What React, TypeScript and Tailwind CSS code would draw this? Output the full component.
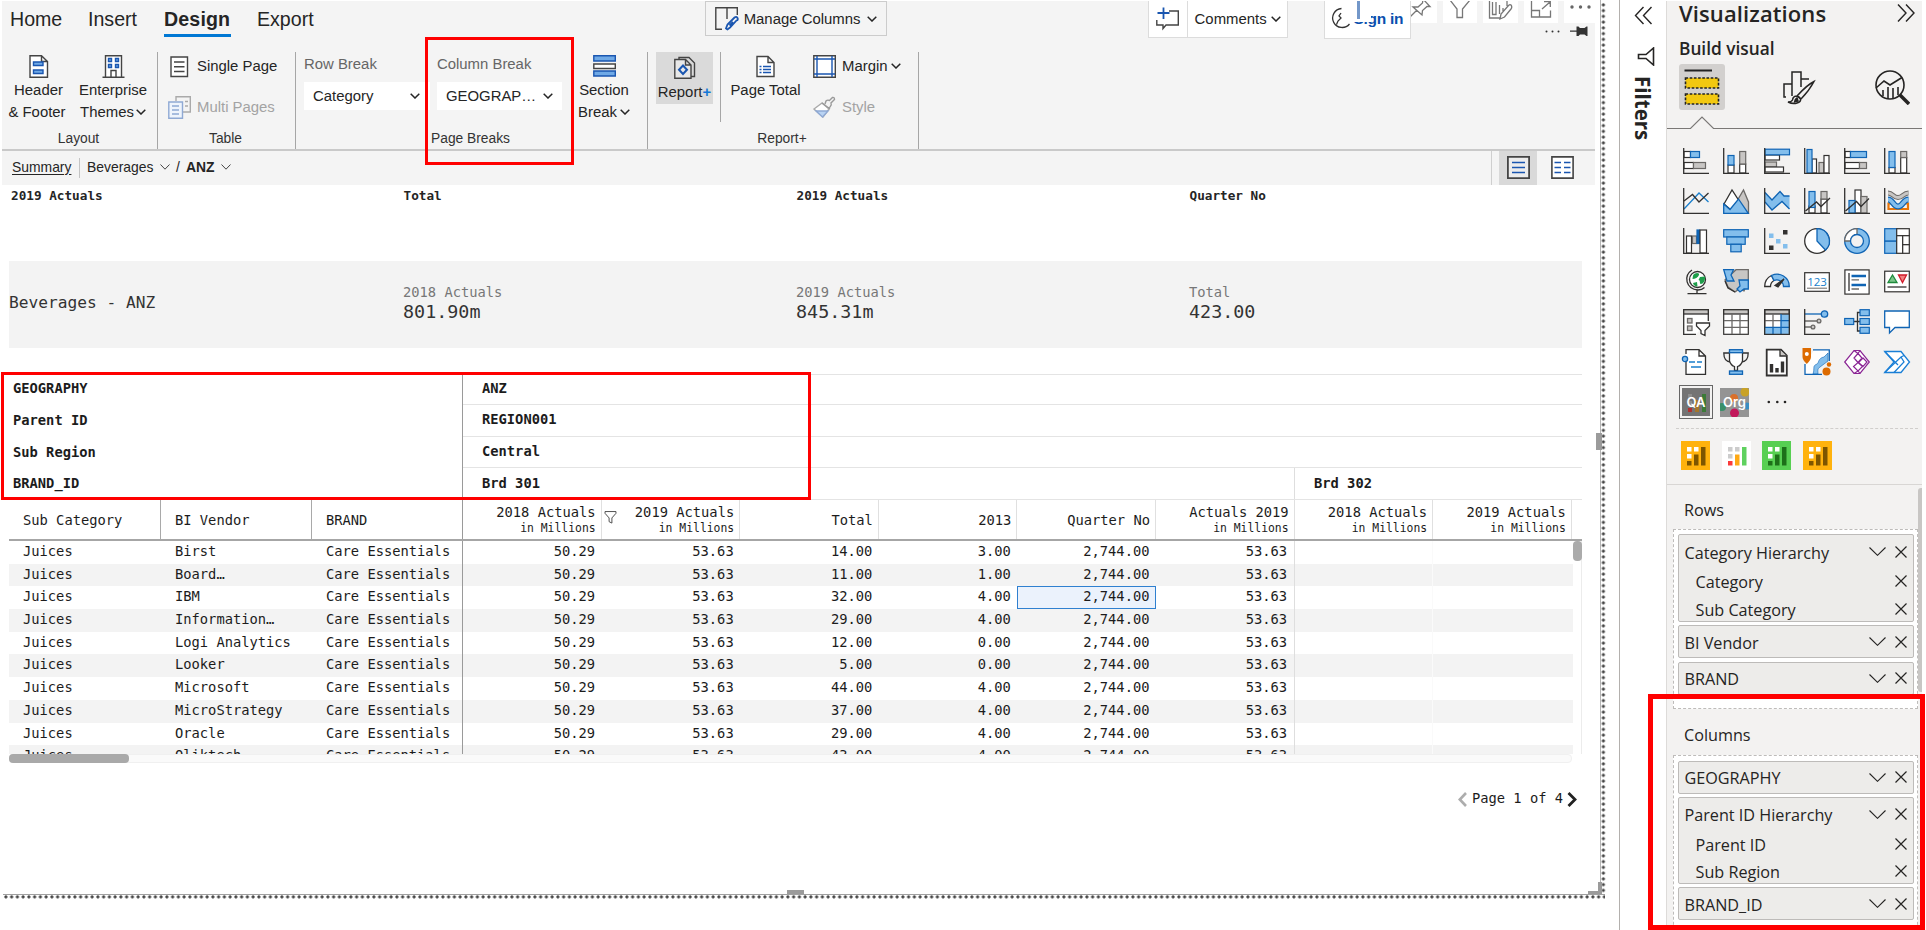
import React from "react";

const D = "#323130";
const B = "#83beec";
const BS = "#0f64b4";
const G = "#c8c6c4";
const GS = "#6b6967";
const W = "#ffffff";

type BoxProps = { x: number; y: number; w: number; h: number; f?: string; s?: string };
const Box = ({ x, y, w, h, f = W, s = D }: BoxProps) => (
  <rect x={x} y={y} width={w} height={h} fill={f} stroke={s} strokeWidth={1.2} />
);
const Axis = () => <path d="M.7 0V25.3H26" fill="none" stroke={D} strokeWidth={1.3} />;
const Ico = ({ children }: { children: React.ReactNode }) => (
  <svg className="block h-[26px] w-[26px] overflow-visible" viewBox="0 0 26 26" fill="none" strokeWidth={1.3}>
    {children}
  </svg>
);

const Chev = ({ className = "" }: { className?: string }) => (
  <svg className={`block h-[6px] w-[10px] shrink-0 ${className}`} viewBox="0 0 10 6" fill="none" stroke="currentColor" strokeWidth="1.5">
    <path d="M.7.7L5 5L9.3.7" />
  </svg>
);

const ThinChev = ({ className = "" }: { className?: string }) => (
  <svg className={`block h-[6px] w-[10px] shrink-0 ${className}`} viewBox="0 0 10 6" fill="none" stroke="#444" strokeWidth="1">
    <path d="M.5.5L5 5.2L9.5.5" />
  </svg>
);

const vizIcons: React.ReactNode[] = [
  <><Box x={1} y={3.5} w={6.5} h={6} /><Box x={7.5} y={3.5} w={9} h={6} f={B} s={BS} /><Box x={1} y={14.5} w={9.5} h={6} /><Box x={10.5} y={14.5} w={12} h={6} f={G} s={GS} /><Axis /></>,
  <><Box x={5} y={17} w={6} h={8} /><Box x={5} y={7.5} w={6} h={9.5} f={B} s={BS} /><Box x={16.7} y={16} w={6} h={9} /><Box x={16.7} y={3.5} w={6} h={12.5} f={G} s={GS} /><Axis /></>,
  <><Box x={1} y={7} w={14.5} h={5} /><Box x={1} y={14} w={11.5} h={5} f={G} s={GS} /><Box x={1} y={19} w={18.5} h={5} /><Box x={1} y={1.2} w={24.5} h={5.6} f={B} s={BS} /><Axis /></>,
  <><Box x={8} y={11} w={4.5} h={14} /><Box x={15} y={14.5} w={5} h={10.5} f={G} s={GS} /><Box x={20} y={7.5} w={5} h={17.5} /><Box x={3} y={1.5} w={5} h={23.5} f={B} s={BS} /><Axis /></>,
  <><Box x={1} y={3.5} w={5.5} h={6} /><Box x={6.5} y={3.5} w={16} h={6} f={B} s={BS} /><Box x={1} y={14.5} w={14.5} h={6} /><Box x={15.5} y={14.5} w={7} h={6} f={G} s={GS} /><Axis /></>,
  <><Box x={5} y={19.5} w={6} h={5.5} /><Box x={5} y={3.5} w={6} h={16} f={B} s={BS} /><Box x={16.7} y={9.5} w={6} h={15.5} /><Box x={16.7} y={3.5} w={6} h={6} f={G} s={GS} /><Axis /></>,

  <><path d="M1 21L16 5L25.5 14" stroke="#1a7fcc" /><path d="M1 13L9.5 6.5L16 14L25.5 5" stroke={D} /><Axis /></>,
  <><path d="M14 13L20.5 2L25.5 14V25H20Z" fill={G} stroke={GS} /><path d="M1 16L9 2L15.5 12L8 22Z" fill={W} stroke={D} /><path d="M.7 25.3V16L7 21.5L15.5 11L25.3 25.3Z" fill={B} stroke={BS} /></>,
  <><path d="M1 4.5L8 12L16 3.5L20 8H25.5V21L18 13.5L8 22L1 14Z" fill={B} /><path d="M1 4.5L8 12L16 3.5L20 8H25.5M25.5 21L18 13.5L8 22L1 14" stroke={BS} /><Axis /></>,
  <><Box x={5} y={18} w={6} h={7} /><Box x={5} y={3.5} w={6} h={16} f={B} s={BS} /><Box x={17} y={11} w={6} h={14} /><Box x={17} y={3.5} w={6} h={7.5} f={G} s={GS} /><path d="M1.5 23L12.5 14L17 18.5L26 10" stroke={D} /><Axis /></>,
  <><Box x={11} y={2} w={6} h={23} /><Box x={17} y={8.5} w={6} h={16.5} f={G} s={GS} /><Box x={5} y={12.5} w={6} h={12.5} f={B} s={BS} /><path d="M1.5 23L12.5 13.5L17 18.5L25 10.5" stroke={D} /><Axis /></>,
  <><path d="M4.500 15.500H9L13 19L17 15.500H24V21H4.500Z" fill="none" stroke="#e8760a" strokeWidth={2.2} /><path d="M4 5C9 5 9 9.500 14 9.500S19 5 24.500 5" stroke={GS} strokeWidth={5} /><path d="M4 5C9 5 9 9.500 14 9.500S19 5 24.500 5" stroke={G} strokeWidth={3} /><path d="M4 11.500C9 11.500 9 18.500 14 18.500S19 11.500 24.500 11.500" stroke={BS} strokeWidth={6} /><path d="M4 11.500C9 11.500 9 18.500 14 18.500S19 11.500 24.500 11.500" stroke={B} strokeWidth={3.6} /><Axis /></>,

  <><Box x={3.5} y={8} w={5} h={17} /><Box x={9.5} y={8} w={4} h={7.5} f={G} s={GS} /><Box x={14} y={2} w={2.6} h={13.5} f={BS} s={BS} /><Box x={17} y={2} w={6.5} h={23} /><Axis /></>,
  <><Box x={0.7} y={1.7} w={24.6} h={7.3} f={B} s={BS} /><Box x={3.8} y={9} w={18.4} h={7.3} f={B} s={BS} /><Box x={7.8} y={16.3} w={10.4} h={7.5} f={B} s={BS} /></>,
  <><rect x="5" y="5.5" width="4.5" height="4.5" fill={B} /><rect x="12" y="11" width="4.5" height="4.5" fill={B} /><rect x="19" y="16" width="4.5" height="4.5" fill={B} /><rect x="19" y="2" width="4.5" height="4.5" fill={D} /><rect x="5" y="17.5" width="4.5" height="4.5" fill={D} /><Axis /></>,
  <><circle cx="13" cy="13" r="12.3" fill={W} stroke={D} /><path d="M13 .7A12.3 12.3 0 0 1 21.5 22L13 13Z" fill={B} stroke={BS} /></>,
  <><circle cx="13" cy="13" r="12.3" fill={B} stroke={BS} /><path d="M13 .7A12.3 12.3 0 0 0 .7 13H6.5A6.5 6.5 0 0 1 13 6.5Z" fill={W} stroke={GS} /><circle cx="13" cy="13" r="6.5" fill="#f3f2f1" stroke={BS} /></>,
  <><Box x={0.7} y={0.7} w={12} h={12.5} f={B} s={BS} /><Box x={0.7} y={13.2} w={12} h={12.1} f={B} s={BS} /><Box x={12.7} y={0.7} w={12.6} h={7} /><Box x={12.7} y={7.7} w={6} h={17.6} /><Box x={18.7} y={7.7} w={6.6} h={9} /><Box x={18.7} y={16.7} w={6.6} h={8.6} /></>,

  <><circle cx="14.5" cy="10.5" r="8" fill={W} stroke={D} /><path d="M10 6.5C12 3 17 3.500 16 6S12 10 9.500 10ZM17 8L22 7.500C22.500 12 20 15 18 15S18 11 15.500 11ZM10 14L14 13L14.500 17.500C12 17.500 10.500 16 10 14Z" fill="#1e9e4a" /><path d="M9 1C0 7 3 20 15 21C18 21 20 20 21.500 18.500M14 21V24.500M4.500 24.700H23.500" stroke={D} /></>,
  <><path d="M13 .7H25.300V12L21 22L16 20L12 23L5 18L2 11Z" fill={G} stroke={GS} /><path d="M.7.7H10.500L8 6L11 12H4Z" fill={B} stroke={BS} /><path d="M16 11H25.300V20H21L17 23L14 20L17 17Z" fill={B} stroke={BS} /><path d="M2 12L5 19L12 23" stroke={D} /></>,
  <><path d="M.7 17.500A12.300 12.300 0 0 1 7.500 6.500L10 11.500A6.800 6.800 0 0 0 6.500 17.500Z" fill={W} stroke={D} /><path d="M7.500 6.500A12.300 12.300 0 0 1 25.300 17.500H19.500A6.800 6.800 0 0 0 10 11.500Z" fill={B} stroke={BS} /><path d="M11 16.500L20 10L14 18Z" fill={D} stroke={D} /></>,
  <><Box x={0.7} y={3.7} w={24.6} h={18.6} /><text x="13" y="16.500" textAnchor="middle" fontSize="11.500" fontFamily="Open Sans, sans-serif" fill="#1a7fcc">123</text><path d="M3 19.200H23" stroke={GS} strokeWidth={1} /></>,
  <><Box x={0.9} y={0.9} w={24.2} h={24.2} /><path d="M5 4V22" stroke={D} /><path d="M7.500 7H22M7.500 16H22" stroke={BS} strokeWidth={2.600} /><path d="M7.500 10.800H15M7.500 20H15" stroke={GS} /></>,
  <><Box x={0.7} y={2.2} w={24.6} h={20.6} /><path d="M4 13.500L8.500 6L13 13.500Z" fill="#7cc58a" stroke="#1e8a3c" /><path d="M14.500 6H22.500L18.500 13.500Z" fill="#f08080" stroke="#d11a2a" /><path d="M3.500 18H22.500" stroke={D} /></>,

  <><path d="M13 25.300H.7V.7H25.300V12" fill={W} stroke={D} /><rect x=".7" y=".7" width="24.600" height="4.300" fill={G} stroke={D} /><rect x="4.500" y="9.500" width="4.500" height="4.500" fill={G} stroke={GS} /><rect x="4.500" y="17" width="4.500" height="4.500" fill={G} stroke={GS} /><path d="M13.500 14H26.500V17L22 21.500V26.500L18 24.500V21.500L13.500 17Z" fill={W} stroke={D} /></>,
  <><Box x={0.7} y={0.7} w={24.6} h={24.6} /><rect x=".7" y=".7" width="24.600" height="4.300" fill={G} stroke={D} /><path d="M9 5V25M17 5V25M1 11.700H25M1 18.400H25" stroke={GS} /></>,
  <><Box x={0.7} y={0.7} w={24.6} h={24.6} /><path d="M17 5H25V25H1V18.400H17Z" fill={B} /><rect x=".7" y=".7" width="24.600" height="4.300" fill={G} stroke={D} /><path d="M9 5V18M1 11.700H17" stroke={GS} /><path d="M17 5V25M17 11.700H25M1 18.400H25M9 18.400V25" stroke={BS} /><path d="M.7.7H25.300V25.300H.7Z" stroke={D} /></>,
  <><path d="M1 5H17" stroke={BS} /><circle cx="20.500" cy="5" r="3.200" fill={B} stroke={BS} /><path d="M1 12H13M1 18H7" stroke={GS} /><circle cx="15" cy="12" r="1.900" fill={G} stroke={GS} /><circle cx="9" cy="18" r="1.900" fill={G} stroke={GS} /><Axis /></>,
  <><path d="M10 12.500H16M16 3.500H13.500V22H16" stroke={D} /><Box x={0.7} y={9.5} w={9} h={6} f={B} s={BS} /><Box x={16} y={0.7} w={9.3} h={6} f={B} s={BS} /><Box x={16} y={9.5} w={9.3} h={6} f={B} s={BS} /><Box x={16} y={18.3} w={9.3} h={6} f={B} s={BS} /></>,
  <path d="M.7 2H25.300V18.500H11L5.500 24V18.500H.7Z" fill={W} stroke={BS} />,

  <><path d="M3 8V25.300H22.500V7L16 .7H3V5M16 .7V7H22.500" fill={W} stroke={D} /><path d="M6 13H12M14 13H19M8 18H18" stroke="#1a7fcc" /><circle cx="2" cy="10" r="2.600" fill={B} stroke={BS} /></>,
  <><path d="M6.500 4H.8C.8 10 3 13 8 13M19.500 4H25.200C25.200 10 23 13 18 13" stroke={D} /><path d="M6.500 3V12Q8 16.500 11.500 17.500V21.500H14.500V17.500Q18 16.500 19.500 12V3Z" fill={W} stroke={D} /><rect x="6.500" y=".7" width="13" height="3" fill={B} stroke={BS} /><rect x="6.500" y="22" width="13" height="3.300" fill={B} stroke={BS} /></>,
  <><path d="M2.700.7H17L22.800 6.500V26.500H2.700Z" fill={W} stroke={D} strokeWidth={1.8} /><path d="M16 .7V7H22.800" fill={G} stroke={D} /><path d="M7.500 15V23.500M13 19V23.500M18.500 12.500V23.500" stroke={D} strokeWidth={3.400} /></>,
  <><path d="M1 16V25H9C12 21 11 18 15 17S19 12 24 12V1H10Z" fill={W} /><path d="M9 25C11 19 8 17 13 15C15 14 14 9 20 8L24 4V12C21 14 19 16 16 18S14 22 14 25Z" fill={B} stroke={BS} strokeWidth={.6} /><path d="M9 .8H25.300V12M1 15V25.300H18" stroke={BS} /><path d="M-1.500-1H7V8Q7 11 2.800 15Q-1.500 11-1.500 8Z" fill="#dd6b00" /><circle cx="2.800" cy="5" r="2" fill={W} /><circle cx="22.500" cy="22.500" r="4" fill="#dd6b00" /><circle cx="25" cy="15.500" r="2.200" fill="#dd6b00" /></>,
  <g stroke="#8a2494" fill={W} strokeWidth={1.200}><path d="M10 1.500H16L25.300 13L16 24.500H10L.7 13Z" /><path d="M14 4.500L18 9L14 13.500L10 9ZM19 9L23 13L19 17.500L14.500 13.500ZM14 13.500L18.500 17.500L14 22L9.500 17.500ZM14 4.500L10 1.500M14 4.500L16 1.500M14 22L10 24.500M14 22L16 24.500" /></g>,
  <g stroke="#1a7fd6" fill={W}><path d="M.7 2.500H17L25.500 13L17 23.500H.7L10 13Z" /><path d="M.7 2.500L14 16M.7 23.500L17 8L20 6.500M10 23.500L20 13L17 8" fill="none" /></g>,
];

const Icon23 = ({ children, className = "" }: { children: React.ReactNode; className?: string }) => (
  <svg className={`block h-[23px] w-[23px] shrink-0 overflow-visible ${className}`} viewBox="0 0 23 23" fill="none" stroke="#444" strokeWidth={1.4}>{children}</svg>
);
const K = "#1a56b0";
const KF = "#6fa9e6";

function RibbonGroup({ label, className, children }: { label: string; className: string; children: React.ReactNode }) {
  return (
    <div className={`flex h-[97px] shrink-0 flex-col justify-between border-r border-[#a6a6a6] ${className}`}>
      <div className="flex">{children}</div>
      <div className="h-[21px] pr-[2px] text-center text-[13.8px] leading-[21px] text-[#333]">{label}</div>
    </div>
  );
}

function Ribbon() {
  return (
    <div className="ml-[2px] mt-px h-[184px] w-[1593px] shrink-0 overflow-hidden bg-[#f4f4f4] font-['Liberation_Sans',Arial,sans-serif] text-[14.9px] text-[#252525]">
      <div className="flex h-[51px]">
        <div className="flex w-[703px] pl-[8px] text-[19.6px] leading-[33px]">
          <span className="h-[36px] w-[78px] pt-[2px]">Home</span>
          <span className="h-[36px] w-[76px] pt-[2px]">Insert</span>
          <span className="mr-[26px] h-[36px] w-[67px] border-b-[3px] border-[#0078d4] pt-[2px] font-bold tracking-[0.15px]">Design</span>
          <span className="h-[36px] w-[58px] pt-[2px]">Export</span>
        </div>
        <div className="flex h-[35px] w-[182px] items-center border border-[#ccc] pl-[9px]">
          <Icon23>
            <path d="M7 22.300H.8V.8H22.300V8M12 .8V12" />
            <path d="M12.500 22.500L11 21.500L12.500 17.500L19.500 10.500Q21.500 9 22.500 11T21.500 13.500L15 20.500ZM14.500 18.500L18 15" stroke={K} strokeWidth="1.800" />
          </Icon23>
          <span className="ml-[6px] w-[120px] leading-5">Manage Columns</span>
          <Chev className="ml-[3px]" />
        </div>
        <div className="ml-[261px] flex h-[36.500px] w-[140px] border border-t-0 border-[#dcdcdc] bg-white">
          <div className="flex w-[39px] items-center border-r border-[#dcdcdc] pl-[7px]">
            <Icon23>
              <path d="M13 4H22.300V18H10L7 21.500V18H.8V13" />
              <path d="M7.500.5V12M1.500 6H13.500" stroke={K} strokeWidth="1.800" />
            </Icon23>
          </div>
          <span className="ml-[7px] mt-[8px] w-[74px] leading-5">Comments</span>
          <Chev className="ml-[2px] mt-[15px]" />
        </div>
        <div className="relative ml-[36px] flex h-[38px] w-[87.500px] border border-t-0 border-[#dcdcdc] bg-white">
          <svg className="ml-[6px] mt-[6px] block h-[22px] w-[22px]" viewBox="0 0 22 22" fill="none" stroke="#333" strokeWidth="1.300">
            <path d="M10.500 1.500A9.500 9.500 0 1 0 18.500 17M10 6L8 9L10 11L7 14L5.500 17.500" />
          </svg>
          <span className="ml-[1px] mt-[8px] whitespace-nowrap text-[15.500px] font-bold leading-5 tracking-[-0.3px] text-[#0a4fae]">Sign in</span>
          <div className="absolute left-[25px] top-0 h-[21px] w-[21px] bg-white">
            <div className="ml-[7px] h-[18px] w-[3px] bg-[#7397c9]" />
          </div>
        </div>
        <div className="flex flex-col">
          <div className="flex gap-[6px]">
            <div className="h-[22px] w-[26px] bg-white">
              <svg className="ml-[-4px] block h-[22px] w-[26px]" viewBox="0 0 26 22" fill="none" stroke="#777" strokeWidth="1.300"><path d="M2 17L10 9M6 6L15 14L15.500 9.500L20 5.500H23L16-2L15.500 2L11 6Z" /></svg>
            </div>
            <div className="h-[22px] w-[34px] bg-white">
              <svg className="block h-[22px] w-[34px]" viewBox="0 0 34 22" fill="none" stroke="#777" strokeWidth="1.300"><path d="M7-1L14 8V16.500H19.500V8L27-1" /></svg>
            </div>
            <div className="h-[22px] w-[34.500px] bg-white">
              <svg className="block h-[22px] w-[34px]" viewBox="0 0 34 22" fill="none" stroke="#777" strokeWidth="1.300"><path d="M6.500-1V17H17M9.500 1V13.500H13V1M16.500 4V13M20 7V10M24-1V5M28 4Q27 3 25.500 4.500L18 13L17 18L21.500 16L28 8Q29.500 6 28 4Z" /></svg>
            </div>
            <div className="h-[22px] w-[34.500px] bg-white">
              <svg className="block h-[22px] w-[34px]" viewBox="0 0 34 22" fill="none" stroke="#777" strokeWidth="1.300"><path d="M7.500-1V16H26.500V9.500M7.500 9.500H15.500V16M18 8L26 1M20 .7H26.300V6" /></svg>
            </div>
            <div className="h-[22px] w-[31px] bg-white">
              <svg className="block h-[22px] w-[31px]" viewBox="0 0 31 22" fill="#666"><circle cx="8" cy="6" r="1.700" /><circle cx="16.500" cy="6" r="1.700" /><circle cx="25" cy="6" r="1.700" /></svg>
            </div>
          </div>
          <svg className="ml-[134px] mt-[2px] block h-[13px] w-[44px]" viewBox="0 0 44 13" fill="#333">
            <circle cx="1.500" cy="6.500" r="1" /><circle cx="7.500" cy="6.500" r="1" /><circle cx="13.500" cy="6.500" r="1" />
            <path d="M25 5.500H31.500V1.500H33.500L35 3H39.500L41.500 1.500H42.500V11H41.500L39.500 9.500H35L33.500 11H31.500V6.800H25Z" />
          </svg>
        </div>
      </div>

      <div className="flex h-[99px] border-b-2 border-[#c9c9c9]">
        <RibbonGroup label="Layout" className="w-[156px]">
          <div className="flex w-[73px] flex-col items-center pt-[3px] text-center leading-[22.200px]">
            <Icon23>
              <path d="M3 .8H14.500L20.500 6.500V22.300H3ZM14.500.8V6.500H20.500" fill="#fff" />
              <path d="M6.500 7H16V10.500H6.500ZM6.500 15H16V18.500H6.500Z" fill={KF} stroke={K} />
            </Icon23>
            <span className="mt-[1px] whitespace-nowrap">Header</span>
            <span className="mr-[3px] whitespace-nowrap">&amp; Footer</span>
          </div>
          <div className="flex w-[76px] flex-col items-center pt-[3px] leading-[22.200px]">
            <Icon23>
              <path d="M3.500 22V.8H19.500V22M.5 22.300H22.500M9 22V15.500H14V22" fill="#fff" />
              <path d="M6.500 3.500H9.500V6.500H6.500ZM13.500 3.500H16.500V6.500H13.500ZM6.500 9.500H9.500V12.500H6.500ZM13.500 9.500H16.500V12.500H13.500Z" fill={KF} stroke={K} />
            </Icon23>
            <span className="mt-[1px] whitespace-nowrap">Enterprise</span>
            <span className="flex items-center gap-[2px] whitespace-nowrap">Themes<Chev /></span>
          </div>
        </RibbonGroup>

        <RibbonGroup label="Table" className="w-[138px]">
          <div className="flex flex-col gap-[18px] pl-[10px] pt-[3px] leading-[23px]">
            <div className="flex gap-[6px]">
              <Icon23><path d="M3 2H19.500V21.500H3Z" fill="#fff" /><path d="M6 7H16.500M6 11.700H16.500M6 16.500H16.500" /></Icon23>
              <span className="whitespace-nowrap">Single Page</span>
            </div>
            <div className="flex gap-[6px] text-[#a3a3a3]">
              <Icon23><path d="M8 5V.8H22.300V16H15M17 5.500H20M17 10H20" stroke="#aaa" /><path d="M.8 6H14.500V22.300H.8Z" fill="#eef4fc" stroke="#8fa9d4" /><path d="M4 10H11M4 14H11M4 18H11" stroke="#8fa9d4" /></Icon23>
              <span className="whitespace-nowrap">Multi Pages</span>
            </div>
          </div>
        </RibbonGroup>

        <RibbonGroup label="Page Breaks" className="w-[352px]">
          <div className="w-[133px] pl-[8px]">
            <div className="h-[30px] leading-[24px] text-[#666]">Row Break</div>
            <div className="flex h-[28px] w-[126px] items-center justify-between bg-white pl-[9px] pr-[10px]">Category<Chev /></div>
          </div>
          <div className="w-[137px] pl-[8px]">
            <div className="h-[30px] leading-[24px] text-[#666]">Column Break</div>
            <div className="flex h-[28px] w-[125px] items-center justify-between bg-white pl-[9px] pr-[9px]">GEOGRAP…<Chev /></div>
          </div>
          <div className="flex w-[76px] flex-col items-center pt-[3px] leading-[22.200px]">
            <Icon23><path d="M.8 9H22.300V13.500H.8Z" fill="#fff" /><path d="M.8.8H22.300V6H.8ZM.8 16H22.300V21H.8Z" fill={KF} stroke={K} /></Icon23>
            <span className="mt-[1px]">Section</span>
            <span className="flex items-center gap-[3px]">Break<Chev /></span>
          </div>
        </RibbonGroup>

        <RibbonGroup label="Report+" className="w-[271px]">
          <div className="ml-[8px] flex h-[52px] w-[57px] flex-col items-center bg-[#dadada] pt-[4px]">
            <Icon23>
              <path d="M6 3.500V1.500H16L21.500 7V20.500H18" />
              <path d="M1.800 3.500H12.500L18 9V22.300H1.800ZM12.500 3.500V9H18" fill="#e8e8e8" />
              <path d="M10 9.500L14 13.700L10 18L6 13.700Z" stroke={K} strokeWidth="2" />
            </Icon23>
            <span className="whitespace-nowrap leading-[26px]">Report<b className="text-[#1478d6]">+</b></span>
          </div>
          <div className="ml-[7px] h-[70px] w-px bg-[#a6a6a6]" />
          <div className="flex w-[89px] flex-col items-center pt-[3px] leading-[22.200px]">
            <Icon23><path d="M3 1.500H14L20 7.500V21.500H3ZM14 1.500V7.500H20" fill="#fff" /><path d="M5.500 11.500H7.500M9 11.500H17M5.500 14.500H7.500M9 14.500H17M5.500 17.500H7.500M9 17.500H17" stroke={K} /></Icon23>
            <span className="mt-[1px] whitespace-nowrap">Page Total</span>
          </div>
          <div className="flex flex-col gap-[18px] pl-[3px] pt-[3px] leading-[23px]">
            <div className="flex">
              <Icon23><path d="M.8.8H22.300V22.300H.8Z" fill="#fff" /><path d="M4 1V22M19 1V22M1 4H22M1 19H22" stroke={K} /></Icon23>
              <span className="ml-[6px]">Margin</span>
              <Chev className="ml-[3px] mt-[8px]" />
            </div>
            <div className="flex text-[#a3a3a3]">
              <Icon23>
                <path d="M9 7L1 13L10 21L16 13Z" fill="#fff" stroke="#aaa" /><path d="M3 15H15L9.500 21Z" fill="#b9d3f3" stroke="#8fa9d4" />
                <path d="M9 7L17 13M12 8L13 5Q14.500 3.500 16.500 4.500L19.500 1.500Q21.500 1 21.500 3.500L18 7Q19 9 17 11L15.500 12" stroke="#9a9a9a" />
              </Icon23>
              <span className="ml-[6px]">Style</span>
            </div>
          </div>
        </RibbonGroup>
      </div>

      <div className="flex h-[34px] items-center text-[13.900px]">
        <span className="ml-[10px] w-[60px] pb-[2px] underline underline-offset-2">Summary</span>
        <span className="ml-[7px] h-[20px] w-px bg-[#c4c4c4]" />
        <span className="ml-[7px] w-[67px] pb-[2px]">Beverages</span>
        <ThinChev className="ml-[6px] mb-[2px]" />
        <span className="ml-[6px] w-[4px] pb-[2px]">/</span>
        <b className="ml-[6px] w-[29px] pb-[2px]">ANZ</b>
        <ThinChev className="ml-[6px] mb-[2px]" />
        <div className="ml-auto mr-[14px] flex h-full border-l border-[#cfcfcf] pl-[7px]">
          <div className="flex w-[38px] items-center justify-center bg-[#d9d9d9] pb-px">
            <Icon23><path d="M.9.9H22.100V22.100H.9Z" fill="#ececec" strokeWidth="1.800" /><path d="M5 6.500H18M5 11.500H18M5 16.500H18" stroke={K} strokeWidth="1.600" /></Icon23>
          </div>
          <div className="ml-[6px] flex w-[38px] items-center justify-center pb-px">
            <Icon23><path d="M.9.9H22.100V22.100H.9Z" fill="#fff" strokeWidth="1.600" /><path d="M3.500 6.500H10M13 6.500H19.500M3.500 11.500H10M13 11.500H19.500M3.500 16.500H10M13 16.500H19.500" stroke={K} strokeWidth="1.600" /></Icon23>
          </div>
        </div>
      </div>
    </div>
  );
}

const vendors: [string, string, string][] = [
  ["Birst", "14.00", "3.00"],
  ["Board…", "11.00", "1.00"],
  ["IBM", "32.00", "4.00"],
  ["Information…", "29.00", "4.00"],
  ["Logi Analytics", "12.00", "0.00"],
  ["Looker", "5.00", "0.00"],
  ["Microsoft", "44.00", "4.00"],
  ["MicroStrategy", "37.00", "4.00"],
  ["Oracle", "29.00", "4.00"],
  ["Qliktech", "43.00", "4.00"],
];

const summary: [string, string][] = [
  ["2018 Actuals", "801.90m"],
  ["2019 Actuals", "845.31m"],
  ["Total", "423.00"],
];

const headers: [string, boolean][] = [
  ["2018 Actuals", true],
  ["2019 Actuals", true],
  ["Total", false],
  ["2013", false],
  ["Quarter No", false],
  ["Actuals 2019", true],
  ["2018 Actuals", true],
  ["2019 Actuals", true],
];

function Report() {
  return (
    <div className="ml-[9px] w-[1573px] font-['DejaVu_Sans_Mono',monospace] text-[13.750px] text-[#1c1c1c]">
      <div className="flex h-[76px] text-[12.700px] font-bold leading-[22px] text-[#252525]">
        <span className="w-[394.500px] pl-[2px]">2019 Actuals</span>
        <span className="w-[393px]">Total</span>
        <span className="w-[393px]">2019 Actuals</span>
        <span>Quarter No</span>
      </div>
      <div className="flex h-[87px] items-center bg-[#f3f3f3]">
        <span className="w-[394px] pb-[2px] text-[16.200px] text-[#333]">Beverages - ANZ</span>
        {summary.map(([label, value]) => (
          <div key={label} className="w-[393px] pb-[6px]">
            <div className="text-[13.750px] leading-[20px] text-[#777]">{label}</div>
            <div className="text-[18.400px] leading-[20px] text-[#333]">{value}</div>
          </div>
        ))}
      </div>

      <div className="mt-[26px] flex h-[126px] border-b border-t border-[#e4e4e4] font-bold">
        <div className="flex w-[454px] shrink-0 flex-col border-r border-[#9a9a9a] pl-[4px]">
          <span className="h-[30px] leading-[27px]">GEOGRAPHY</span>
          <span className="h-[32px] leading-[30px]">Parent ID</span>
          <span className="h-[31px] leading-[30px]">Sub Region</span>
          <span className="leading-[31px]">BRAND_ID</span>
        </div>
        <div className="flex flex-1 flex-col">
          <span className="h-[30px] border-b border-[#e4e4e4] pl-[19px] leading-[27px]">ANZ</span>
          <span className="h-[32px] border-b border-[#e4e4e4] pl-[19px] leading-[28px]">REGION001</span>
          <span className="h-[31px] border-b border-[#e4e4e4] pl-[19px] leading-[28px]">Central</span>
          <div className="flex flex-1 leading-[31px]">
            <span className="w-[832px] border-r border-[#dedede] pl-[19px]">Brd 301</span>
            <span className="pl-[19px]">Brd 302</span>
          </div>
        </div>
      </div>

      <div className="flex h-[41px] items-stretch border-b-2 border-[#a6a6a6] leading-[40px]">
        <span className="w-[152px] shrink-0 border-r border-[#a9a9a9] pl-[14px]">Sub Category</span>
        <span className="w-[151px] shrink-0 border-r border-[#a9a9a9] pl-[14px]">BI Vendor</span>
        <span className="w-[151px] shrink-0 border-r border-[#9a9a9a] pl-[14px]">BRAND</span>
        {headers.map(([h, millions], i) => (
          <div key={i} className="flex w-[138.600px] shrink-0 justify-between border-r border-[#e0e0e0] pl-[2px] pr-[5px]">
            {i === 1 ? (
              <svg className="mt-[11px] block h-[13px] w-[13px]" viewBox="0 0 13 14" fill="none" stroke="#444"><path d="M.6.600H12.400V2.500L8 7.500V13L5 11.500V7.500L.6 2.500Z" /></svg>
            ) : <i />}
            {millions ? (
              <span className="flex flex-col pt-[3px] text-right leading-[18px]">
                <span>{h}</span>
                <span className="text-[11.400px] leading-[14px]">in Millions</span>
              </span>
            ) : <span>{h}</span>}
          </div>
        ))}
      </div>

      <div className="flex h-[213px]">
        <div className="h-[213px] w-[1564px] shrink-0 overflow-hidden">
          {vendors.map(([v, total, y], r) => (
            <div key={v} className={`flex h-[22.700px] leading-[21px] ${r % 2 ? "bg-[#f3f3f3]" : "bg-white"}`}>
              <span className="w-[152px] shrink-0 pl-[14px]">Juices</span>
              <span className="w-[151px] shrink-0 pl-[14px]">{v}</span>
              <span className="w-[151px] shrink-0 border-r border-[#9a9a9a] pl-[14px]">Care Essentials</span>
              {["50.29", "53.63", total, y, "2,744.00", "53.63"].map((c, i) => (
                <span
                  key={i}
                  className={`w-[138.600px] shrink-0 pr-[6.500px] text-right ${i === 5 ? "border-r border-[#dedede]" : ""} ${r === 2 && i === 4 ? "bg-[#ebf2fc] outline-1 -outline-offset-1 outline-[#2f80d0]" : ""}`}
                >
                  {c}
                </span>
              ))}
              <span className="w-[138.700px] shrink-0 border-r border-[#fafafa]" />
            </div>
          ))}
        </div>
        <div className="w-[9px] border-r border-[#ececec]">
          <div className="h-[20px] w-[9px] rounded-[4px] bg-[#ababab]" />
        </div>
      </div>
      <div className="h-[9px] w-[1563px] rounded-[4px] border border-[#f0f0f0] bg-[#fafafa]">
        <div className="-ml-px -mt-px h-[9px] w-[120px] rounded-[4px] bg-[#a9a9a9]" />
      </div>
      <div className="mt-[24px] flex items-center justify-end pr-[5px] leading-[22px]">
        <svg className="mt-[2px] block h-[15px] w-[9px]" viewBox="0 0 9 15" fill="none" stroke="#adadad" strokeWidth="2.600"><path d="M8 1L1.800 7.500L8 14" /></svg>
        <span className="ml-[5px] mr-[4px]">Page 1 of 4</span>
        <svg className="mt-[2px] block h-[15px] w-[10px]" viewBox="0 0 10 15" fill="none" stroke="#222" strokeWidth="2.800"><path d="M1.500 1L8 7.500L1.500 14" /></svg>
      </div>
    </div>
  );
}

const XMark = () => (
  <svg className="block h-[12px] w-[12px] shrink-0" viewBox="0 0 12 12" fill="none" stroke="#252423" strokeWidth="1.200"><path d="M.5.500L11.500 11.500M11.500.500L.5 11.500" /></svg>
);

function Field({ name, children }: { name: string; children?: string[] }) {
  return (
    <div className={`w-[236px] shrink-0 rounded-[2px] border border-[#bdbbb9] bg-[#edecea] pl-[6px] pr-[6px] ${children ? "h-[87.500px] pt-px" : "h-[33px]"}`}>
      <div className="flex h-[31px] items-center">
        <span className="flex-1 whitespace-nowrap pt-[2px]">{name}</span>
        <svg className="mr-[9px] block h-[9px] w-[17px]" viewBox="0 0 17 9" fill="none" stroke="#252423" strokeWidth="1.100"><path d="M.5.500L8.500 8.300L16.500.500" /></svg>
        <XMark />
      </div>
      {children?.map((c) => (
        <div key={c} className="flex h-[27.500px] items-center justify-between pl-[11px]">
          <span className="pt-[2px]">{c}</span>
          <XMark />
        </div>
      ))}
    </div>
  );
}

const MiniBars = ({ bg, sq, colors }: { bg: string; sq: string; colors: [string, string, string] }) => (
  <svg className="block h-[29px] w-[29px]" viewBox="0 0 29 29">
    <path d="M0 0H29V29H0Z" fill={bg} />
    <path d="M6 6H10.500V10.500H6ZM13 6H17.500V10.500H13ZM6 13H10.500V17.500H6Z" fill={sq} />
    <path d="M6 20H10.500V24.500H6Z" fill={colors[0]} />
    <path d="M13 13.500H17.500V24.500H13Z" fill={colors[1]} />
    <path d="M20 6H24.500V24.500H20Z" fill={colors[2]} />
  </svg>
);

function VisualPanel() {
  return (
    <div className="mt-px flex h-[929px] w-[256px] shrink-0 flex-col overflow-hidden border-l border-[#dddbd9] bg-[#f3f2f1] font-['Open_Sans','Noto_Sans',sans-serif] text-[16.200px] text-[#252423]">
      <div className="flex h-[28px] items-start justify-between pl-[12px] pr-[7px]">
        <span className="text-[22px] font-semibold leading-[25px] tracking-[0.1px]">Visualizations</span>
        <svg className="mt-[3px] block h-[18px] w-[18px]" viewBox="0 0 18 18" fill="none" stroke="#252423" strokeWidth="1.400"><path d="M1 .5L9 9L1 17.500M9 .5L17 9L9 17.500" /></svg>
      </div>
      <div className="h-[35px] pl-[12px] text-[17.300px] font-semibold leading-[39px]">Build visual</div>
      <div className="flex h-[46px] items-center pl-[12px]">
        <div className="flex h-[46px] w-[46px] items-center justify-center rounded-[3px] bg-[#d2d0ce]">
          <svg className="block h-[37px] w-[36px]" viewBox="0 0 36 37" fill="none">
            <path d="M.5 1.500H28" stroke="#222" strokeWidth="2" />
            <path d="M1.500 9H34.500V19H1.500ZM1.500 25H34.500V35H1.500Z" fill="#f2c811" stroke="#222" strokeWidth="1.600" strokeDasharray="2.600 1.600" />
          </svg>
        </div>
        <svg className="ml-[58px] block h-[33px] w-[32px] overflow-visible" viewBox="0 0 32 33" fill="none" stroke="#252423" strokeWidth="1.500">
          <path d="M3 26H1V13H9V25M9 13V1H18V16M18 8H26" />
          <path d="M31 10.500Q24 14 14.500 24.500L18 28Q26 20 31 10.500ZM14 25Q10 25 9.500 29Q8.500 31 5 31Q10 33.500 14 32Q18 31 17.500 28Z" fill="#f3f2f1" />
          <path d="M14 27Q12 28 11.500 31L15 30Z" fill="#252423" />
        </svg>
        <svg className="ml-[60px] block h-[35px] w-[35px]" viewBox="0 0 35 35" fill="none" stroke="#252423" strokeWidth="1.600">
          <circle cx="15" cy="15" r="14" />
          <path d="M1 18L9 11L15 15L27 7.500M8 20V26M13 17V29M18 18V28M23 17V25" />
          <path d="M25 25L34 34" strokeWidth="3.500" />
        </svg>
      </div>
      <svg className="mt-[6px] block h-[14px] w-[256px] shrink-0" viewBox="0 0 256 14" fill="none" stroke="#7a7876" strokeWidth="1.200"><path d="M0 12.500H23.500L35 1L46.500 12.500H256" /></svg>
      <div className="mt-[18px] grid grid-cols-[repeat(6,26px)] gap-x-[14.300px] gap-y-[14.200px] pl-[16px]">
        {vizIcons.map((n, i) => <Ico key={i}>{n}</Ico>)}
      </div>
      <div className="mt-[10px] flex h-[35px] items-center pl-[12px] font-['Inter',sans-serif] text-[13px] font-semibold text-white">
        <div className="h-[34px] w-[34px] border border-[#666] p-[2px]">
          <div className="relative flex h-[28px] w-[28px] items-center justify-center bg-[#747474]">
            <svg className="absolute inset-0 block h-[28px] w-[28px]" viewBox="0 0 28 28"><path d="M6 6H10V10H6ZM6 13H10V17H6Z" fill="#8d8d8d" /><path d="M6 20H10V24H6Z" fill="#b03030" /><path d="M13 12H17V24H13Z" fill="#a5762a" /><path d="M20 6H24V24H20Z" fill="#3c7a38" /></svg>
            <span className="relative">QA</span>
          </div>
        </div>
        <div className="relative ml-[7px] flex h-[29px] w-[29px] items-center justify-center overflow-hidden bg-[#949494]">
          <svg className="absolute inset-0 h-[29px] w-[29px]" viewBox="0 0 29 29"><circle cx="14" cy="10" r="4" fill="#d9702b" /><circle cx="25" cy="4" r="4.500" fill="#c9a227" /><circle cx="2" cy="19" r="4" fill="#3a8f6a" /><circle cx="14.500" cy="25" r="4.500" fill="#c2185b" /><circle cx="27" cy="18" r="3.500" fill="#3a8fc2" /></svg>
          <span className="relative">Org</span>
        </div>
        <svg className="ml-[18px] block h-[4px] w-[20px]" viewBox="0 0 20 4" fill="#252423"><circle cx="1.800" cy="2" r="1.300" /><circle cx="10.300" cy="2" r="1.300" /><circle cx="18" cy="2" r="1.300" /></svg>
      </div>
      <div className="ml-[9px] mt-[8px] w-[242px] border-t border-dashed border-[#d0cecc]" />
      <div className="mt-[12px] flex gap-[11.500px] pl-[14px]">
        <MiniBars bg="#ffb20d" sq="#fff" colors={["#7d5500", "#7d5500", "#7d5500"]} />
        <MiniBars bg="#fff" sq="#ccc" colors={["#fb3b3b", "#ffa914", "#5fd15f"]} />
        <MiniBars bg="#57cf52" sq="#fff" colors={["#1d7019", "#1d7019", "#1d7019"]} />
        <MiniBars bg="#ffb20d" sq="#fff" colors={["#7d5500", "#7d5500", "#7d5500"]} />
      </div>
      <div className="mt-[14px] flex h-[445px] shrink-0 border-t border-[#d8d6d4]">
        <div className="w-[251px] pl-[6px]">
          <div className="h-[44px] pl-[11px] leading-[50px]">Rows</div>
          <div className="flex h-[180px] w-[245px] flex-col gap-[3.300px] border border-dashed border-[#bebcba] bg-white pl-[3.500px] pt-[4.500px]">
            <Field name="Category Hierarchy">{["Category", "Sub Category"]}</Field>
            <Field name="BI Vendor" />
            <Field name="BRAND" />
          </div>
          <div className="h-[46px] pl-[11px] leading-[52px]">Columns</div>
          <div className="flex h-[190px] w-[245px] flex-col gap-[3px] border border-dashed border-[#bebcba] bg-white pl-[3.500px] pt-[5px]">
            <Field name="GEOGRAPHY" />
            <Field name="Parent ID Hierarchy">{["Parent ID", "Sub Region"]}</Field>
            <Field name="BRAND_ID" />
          </div>
        </div>
        <div className="mt-[3px] h-[204px] w-[4px] rounded-l-[3px] bg-[#c8c6c4]" />
      </div>
    </div>
  );
}

export default function App() {
  return (
    <div className="relative flex h-[930px] w-[1926px] overflow-hidden bg-white">
      <div className="flex w-[1606px] shrink-0 flex-col">
        <div className="flex h-[894px]">
          <div className="flex w-[1601px] flex-col border-r border-[#b5b5b5]">
            <Ribbon />
            <Report />
          </div>
          <div className="mt-[2px] w-[5px] bg-[radial-gradient(circle,#444_1.200px,transparent_1.900px)] bg-[length:5.750px_5.750px] bg-[position:-0.500px_0]" />
        </div>
        <div className="ml-[3px] h-[6px] w-[1602px] border-t border-[#a0a0a0] bg-[radial-gradient(circle,#444_1.200px,transparent_1.900px)] bg-[length:5.750px_5.750px] bg-[position:0_-1px] bg-repeat-x" />
      </div>
      <div className="ml-[13px] flex w-[47px] shrink-0 flex-col border-l border-[#b3b0ad]">
        <svg className="ml-[14px] mt-[6px] block h-[19px] w-[19px]" viewBox="0 0 19 19" fill="none" stroke="#252423" strokeWidth="1.400"><path d="M9.500 1L1.500 9.500L9.500 18M17.500 1L9.500 9.500L17.500 18" /></svg>
        <svg className="ml-[17px] mt-[22px] block h-[19px] w-[18px]" viewBox="0 0 18 19" fill="none" stroke="#252423" strokeWidth="1.600"><path d="M16.500 1V18L9 11.500H1.500V7.500H9Z" /></svg>
        <div className="flex pl-[10px] pt-[10px]">
          <span className="w-[26px] whitespace-nowrap font-['Open_Sans',sans-serif] text-[20.500px] font-bold leading-[26px] text-[#252423] [writing-mode:vertical-rl]">Filters</span>
        </div>
      </div>
      <VisualPanel />

      <div className="absolute left-[1596px] top-[433px] h-[17px] w-[6px] bg-[#9b9b9b]" />
      <div className="absolute left-[787px] top-[890px] h-[4px] w-[17px] bg-[#9b9b9b]" />
      <div className="absolute left-[1588px] top-[882px] h-[12px] w-[14px] border-b-[3px] border-r-[4px] border-[#9b9b9b]" />
      <div className="absolute left-[425px] top-[37px] h-[128px] w-[149px] border-[3px] border-[#ff0000]" />
      <div className="absolute left-px top-[372px] h-[128px] w-[810px] border-[3px] border-[#ff0000]" />
      <div className="absolute left-[1648px] top-[694px] h-[236px] w-[277px] border-[5px] border-[#ff0000]" />
    </div>
  );
}
